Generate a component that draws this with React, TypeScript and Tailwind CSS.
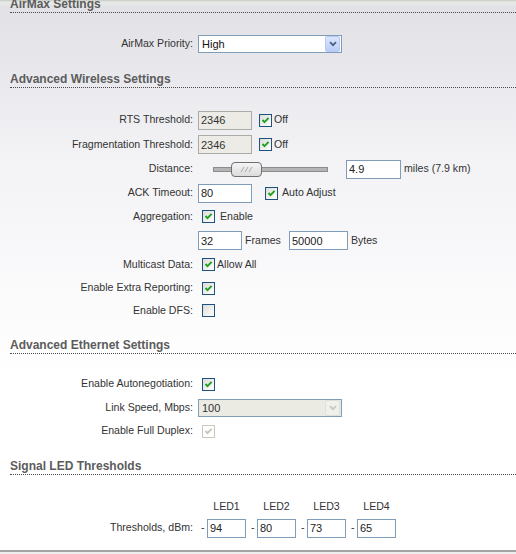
import type { ReactNode } from 'react';

const font = { fontFamily: '"Liberation Sans", Arial, sans-serif' };

function Heading({ children, className = '' }: { children: ReactNode; className?: string }) {
  return (
    <div
      className={`ml-[10px] border-b border-dotted border-[#4a4a4a] pb-px text-[12px] leading-[14px] font-bold text-[#5c5c5c] ${className}`}
    >
      {children}
    </div>
  );
}

function Row({ label, h = 'h-[24px]', children }: { label: string; h?: string; children?: ReactNode }) {
  return (
    <div className={`flex items-center ${h}`}>
      <div className="w-[193px] text-right">{label}</div>
      <div className="ml-[5px] flex items-center">{children}</div>
    </div>
  );
}

function TextBox({ value, w, disabled }: { value: string; w: string; disabled?: boolean }) {
  return (
    <input
      readOnly
      value={value}
      className={`h-[19px] ${w} border px-[2px] text-[11px] outline-none ${
        disabled ? 'border-[#a9aca6] bg-[#ecebe5] text-[#333]' : 'border-[#7f9db9] bg-white text-[#222]'
      }`}
    />
  );
}

function Check({ checked = true, disabled, className = '' }: { checked?: boolean; disabled?: boolean; className?: string }) {
  return (
    <span
      className={`inline-flex h-[13px] w-[13px] shrink-0 items-center justify-center border ${
        disabled
          ? 'border-[#cac8bb] bg-white'
          : 'border-[#1c5180] bg-[linear-gradient(135deg,#dcdcd7,#ffffff)]'
      } ${className}`}
    >
      {checked && (
        <svg width="9" height="9" viewBox="0 0 9 9">
          <path
            d="M1.5 4 L3.5 6.2 L7.6 1.8"
            fill="none"
            stroke={disabled ? '#c4c4c0' : '#21a121'}
            strokeWidth="1.9"
          />
        </svg>
      )}
    </span>
  );
}

function Select({ value, disabled }: { value: string; disabled?: boolean }) {
  return (
    <div
      className={`flex h-[18px] w-[144px] items-center justify-between border border-[#7f9db9] ${
        disabled ? 'bg-[#ebebe4] text-[#333]' : 'bg-white text-[#111]'
      }`}
    >
      <span className="pl-[3px] text-[11px]">{value}</span>
      <span
        className={`mr-px flex h-[16px] w-[15px] items-center justify-center rounded-[2px] border ${
          disabled ? 'border-[#e0e0da] bg-[#f1f1ec]' : 'border-[#b7c9f2] bg-[linear-gradient(180deg,#dbe6fd,#b9cdf8)]'
        }`}
      >
        <svg width="8" height="6" viewBox="0 0 8 6">
          <path d="M1 1.2 L4 4.2 L7 1.2" fill="none" stroke={disabled ? '#c9c9c4' : '#4d6185'} strokeWidth="1.8" />
        </svg>
      </span>
    </div>
  );
}

function Slider() {
  return (
    <div className="relative ml-[15px] h-[15px] w-[115px]">
      <div className="absolute left-0 right-0 top-[5px] h-[5px] border border-[#8c8c8c] bg-[#b4b4b4]" />
      <div className="absolute left-[18px] top-0 flex h-[15px] w-[31px] items-center justify-center rounded-[4px] border border-[#6f6f6f] bg-[linear-gradient(180deg,#f4f4f4,#dcdcdc)]">
        <svg width="14" height="7" viewBox="0 0 14 7">
          <path d="M1 6 L4 1 M5 6 L8 1 M9 6 L12 1" stroke="#a8a8a8" strokeWidth="1" fill="none" />
        </svg>
      </div>
    </div>
  );
}

const leds = [
  { name: 'LED1', value: '94' },
  { name: 'LED2', value: '80' },
  { name: 'LED3', value: '73' },
  { name: 'LED4', value: '65' },
];

export default function App() {
  return (
    <div
      style={font}
      className="min-h-[554px] w-full overflow-hidden bg-[linear-gradient(180deg,#c6c9c2_0px,#e8eae6_2px,#e1e1e6_8px,#f3f3f6_160px,#ffffff_380px)] text-[10.6px] text-[#333]"
    >
      <Heading className="-mt-[3px]">AirMax Settings</Heading>
      <div className="mt-[19px]">
        <Row label="AirMax Priority:">
          <Select value="High" />
        </Row>
      </div>

      <Heading className="mt-[16px]">Advanced Wireless Settings</Heading>
      <div className="mt-[20px]">
        <Row label="RTS Threshold:">
          <TextBox value="2346" w="w-[54px]" disabled />
          <Check className="ml-[7px]" />
          <span className="ml-[2px]">Off</span>
        </Row>
        <Row label="Fragmentation Threshold:" h="h-[25px]">
          <TextBox value="2346" w="w-[54px]" disabled />
          <Check className="ml-[7px]" />
          <span className="ml-[2px]">Off</span>
        </Row>
        <Row label="Distance:">
          <Slider />
          <TextBox value="4.9" w="w-[55px] ml-[18px]" />
          <span className="ml-[3px]">miles (7.9 km)</span>
        </Row>
        <Row label="ACK Timeout:">
          <TextBox value="80" w="w-[54px]" />
          <Check className="ml-[13px]" />
          <span className="ml-[4px]">Auto Adjust</span>
        </Row>
        <Row label="Aggregation:" h="h-[23px]">
          <Check className="ml-[4px]" />
          <span className="ml-[5px]">Enable</span>
        </Row>
        <Row label="" h="h-[25px]">
          <TextBox value="32" w="w-[44px]" />
          <span className="ml-[3px]">Frames</span>
          <TextBox value="50000" w="w-[59px] ml-[8px]" />
          <span className="ml-[3px]">Bytes</span>
        </Row>
        <Row label="Multicast Data:" h="h-[23px]">
          <Check className="ml-[4px]" />
          <span className="ml-[2px]">Allow All</span>
        </Row>
        <Row label="Enable Extra Reporting:">
          <Check className="ml-[4px]" />
        </Row>
        <Row label="Enable DFS:" h="h-[21px]">
          <Check className="ml-[4px]" checked={false} />
        </Row>
      </div>

      <Heading className="mt-[17px]">Advanced Ethernet Settings</Heading>
      <div className="mt-[18px]">
        <Row label="Enable Autonegotiation:">
          <Check className="ml-[4px]" />
        </Row>
        <Row label="Link Speed, Mbps:">
          <Select value="100" disabled />
        </Row>
        <Row label="Enable Full Duplex:" h="h-[22px]">
          <Check className="ml-[4px]" disabled />
        </Row>
      </div>

      <Heading className="mt-[17px]">Signal LED Thresholds</Heading>
      <div className="mt-[22px]">
        <Row label="" h="h-[20px]">
          {leds.map((l) => (
            <div key={l.name} className="flex w-[50px]">
              <span className="w-[9px]" />
              <span className="w-[39px] text-center">{l.name}</span>
            </div>
          ))}
        </Row>
        <Row label="Thresholds, dBm:" h="h-[22px]">
          {leds.map((l) => (
            <div key={l.name} className="flex w-[50px] items-center">
              <span className="w-[9px] pl-[3px]">-</span>
              <TextBox value={l.value} w="w-[39px]" />
            </div>
          ))}
        </Row>
      </div>

      <div className="mt-[11px] h-[5px] border-t-2 border-[#a4a4a4] bg-[#eeeeee]" />
    </div>
  );
}
